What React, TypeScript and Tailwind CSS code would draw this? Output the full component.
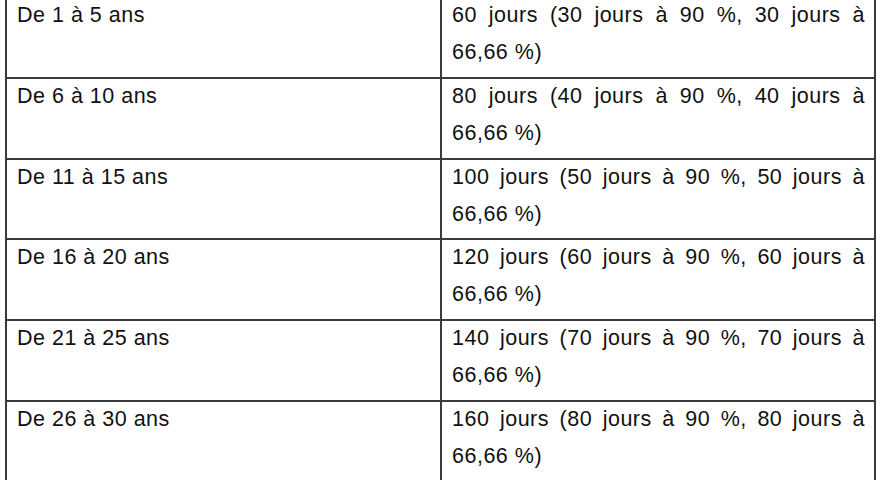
import React from "react";

type Row = {
  range: string;
  days: number;
  half: number;
};

const rows: Row[] = [
  { range: "De 1 à 5 ans", days: 60, half: 30 },
  { range: "De 6 à 10 ans", days: 80, half: 40 },
  { range: "De 11 à 15 ans", days: 100, half: 50 },
  { range: "De 16 à 20 ans", days: 120, half: 60 },
  { range: "De 21 à 25 ans", days: 140, half: 70 },
  { range: "De 26 à 30 ans", days: 160, half: 80 },
];

const JustifiedLine = ({ text }: { text: string }) => {
  const words = text.split(" ");
  return (
    <div className="flex justify-between">
      {words.map((w, i) => (
        <span key={i}>{w}</span>
      ))}
    </div>
  );
};

const App = () => {
  return (
    <div
      className="w-[880px] h-[480px] overflow-hidden bg-white text-[#111] text-[21.5px] leading-[37px] tracking-[0.5px]"
      style={{ fontFamily: '"Liberation Sans", Arial, sans-serif' }}
    >
      <table className="border-collapse ml-[5px] -mt-[4px] w-[869px] table-fixed">
        <colgroup>
          <col className="w-[435px]" />
          <col className="w-[434px]" />
        </colgroup>
        <tbody>
          {rows.map((row) => (
            <tr key={row.range} className="h-[80.75px]">
              <td className="border-2 border-[#3a3a3a] align-top pl-[10px] pr-2 pt-0">
                <div className="-mt-[1px]">{row.range}</div>
              </td>
              <td className="border-2 border-[#3a3a3a] align-top pl-[10px] pr-[9px] pt-0">
                <div className="-mt-[1px]">
                  <JustifiedLine
                    text={`${row.days} jours (${row.half} jours à 90 %, ${row.half} jours à`}
                  />
                  <div>66,66 %)</div>
                </div>
              </td>
            </tr>
          ))}
        </tbody>
      </table>
    </div>
  );
};

export default App;
